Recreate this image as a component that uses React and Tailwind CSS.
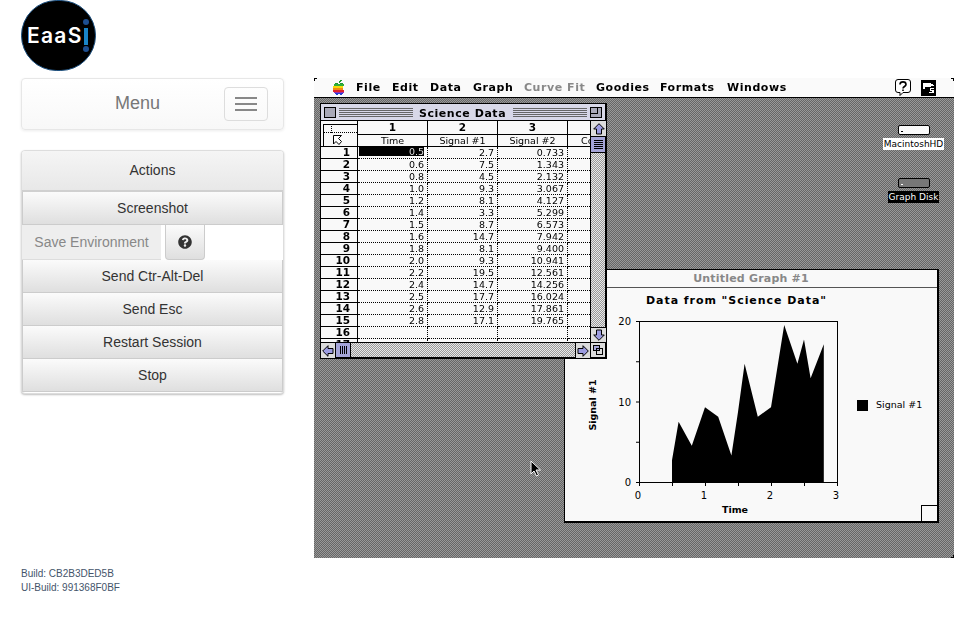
import React from 'react';
import { FaQuestionCircle } from 'react-icons/fa';

const dither = 'bg-[repeating-conic-gradient(#666_0_25%,#999_0_50%)] bg-[length:2px_2px]';
const track = 'bg-[repeating-conic-gradient(#999_0_25%,#e8e8e8_0_50%)] bg-[length:2px_2px]';
const btn = 'flex items-center justify-center bg-gradient-to-b from-[#fbfbfb] to-[#dfdfdf] text-[14px] text-[#333]';

const rows = [
  [0.5, 2.7, 0.733], [0.6, 7.5, 1.343], [0.8, 4.5, 2.132], [1.0, 9.3, 3.067], [1.2, 8.1, 4.127],
  [1.4, 3.3, 5.299], [1.5, 8.7, 6.573], [1.6, 14.7, 7.942], [1.8, 8.1, 9.4], [2.0, 9.3, 10.941],
  [2.2, 19.5, 12.561], [2.4, 14.7, 14.256], [2.5, 17.7, 16.024], [2.6, 12.9, 17.861], [2.8, 17.1, 19.765],
];

const Logo = () => (
  <div className="relative w-[75px] h-[71px] rounded-full bg-black border border-[#1b4f7f] flex items-center pl-[5px]">
    <span className="font-['Inter',sans-serif] font-semibold text-white text-[21px] leading-none tracking-[1.3px]">EaaS</span>
    <span className="absolute left-[61px] top-[18px] w-[6px] h-[6px] rounded-full bg-[#1d4f91]"></span>
    <span className="absolute left-[62px] top-[27px] w-[4px] h-[17px] bg-[#1a85c8]"></span>
    <span className="absolute left-[61px] top-[45px] w-[6px] h-[6px] rounded-full bg-[#1d4f91]"></span>
  </div>
);

const Sidebar = () => (
  <div className="w-[263px] ml-[21px] shrink-0 flex flex-col font-['Liberation_Sans',sans-serif]">
    <Logo />
    <div className="mt-[7px] h-[52px] rounded border border-[#e7e7e7] bg-gradient-to-b from-white to-[#f8f8f8] shadow-[0_1px_3px_rgba(0,0,0,0.08)] flex items-center pl-[93px] pr-[15px] justify-between">
      <span className="text-[18px] text-[#777] pb-[2px]">Menu</span>
      <div className="w-[44px] h-[34px] rounded border border-[#ddd] flex flex-col items-center justify-center gap-[4px]">
        <span className="w-[22px] h-[2px] bg-[#888]"></span>
        <span className="w-[22px] h-[2px] bg-[#888]"></span>
        <span className="w-[22px] h-[2px] bg-[#888]"></span>
      </div>
    </div>
    <div className="mt-[20px] rounded border border-[#ddd] shadow-[0_1px_2px_rgba(0,0,0,0.25)] overflow-hidden bg-white pb-[1px]">
      <div className="h-[41px] bg-gradient-to-b from-[#f5f5f5] to-[#e8e8e8] border-b-2 border-[#d0d0d0] flex items-center justify-center text-[14px] text-[#333]">Actions</div>
      <div className={`${btn} h-[33px] border-x border-b border-[#ccc]`}>Screenshot</div>
      <div className="h-[35px] flex">
        <div className="w-[139px] h-[35px] bg-[#eee] border-b border-[#ddd] flex items-center justify-center text-[14px] text-[#888]">Save Environment</div>
        <div className={`${btn} ml-[4px] w-[40px] h-[35px] rounded-b border-x border-b border-[#ccc]`}>
          <FaQuestionCircle size={14} />
        </div>
      </div>
      {['Send Ctr-Alt-Del', 'Send Esc', 'Restart Session', 'Stop'].map((t) => (
        <div key={t} className={`${btn} h-[33px] border-x border-b border-[#ccc]`}>{t}</div>
      ))}
    </div>
    <div className="mt-[173px] text-[10px] leading-[14px] text-[#44546a]">
      <div>Build: CB2B3DED5B</div>
      <div>UI-Build: 991368F0BF</div>
    </div>
  </div>
);

const AppleLogo = () => (
  <svg width="12" height="15" viewBox="0 0 12 15" shapeRendering="crispEdges">
    <path d="M7 0h2v1H8v1H7v1H6V1h1z" fill="#1f9a2e" />
    <rect x="2" y="3" width="3" height="1" fill="#1f9a2e" />
    <rect x="7" y="3" width="3" height="1" fill="#1f9a2e" />
    <rect x="1" y="4" width="10" height="2" fill="#2fae3a" />
    <rect x="0" y="6" width="10" height="2" fill="#f5d90a" />
    <rect x="0" y="8" width="10" height="2" fill="#f08a12" />
    <rect x="0" y="10" width="11" height="2" fill="#e0232b" />
    <rect x="1" y="12" width="10" height="1" fill="#9b2fae" />
    <rect x="2" y="13" width="8" height="1" fill="#2b3fd6" />
    <rect x="3" y="14" width="2" height="1" fill="#2b3fd6" />
    <rect x="7" y="14" width="2" height="1" fill="#2b3fd6" />
  </svg>
);

const MenuBar = () => {
  const items = [
    ['File', 'w-[36px]'], ['Edit', 'w-[38px]'], ['Data', 'w-[43px]'], ['Graph', 'w-[51px]'],
    ['Curve Fit', 'w-[72px] text-[#888]'], ['Goodies', 'w-[64px]'], ['Formats', 'w-[67px]'], ['Windows', 'w-[70px]'],
  ];
  return (
    <div className="h-[20px] bg-[#fafafa] border-b border-black flex items-center pl-[19px] font-['DejaVu_Sans',sans-serif] font-bold text-[11px] tracking-[0.55px] text-black">
      <AppleLogo />
      <div className="ml-[11px] flex pt-[1px] [will-change:transform]">
        {items.map(([t, c]) => <span key={t} className={`${c} whitespace-nowrap`}>{t}</span>)}
      </div>
      <div className="ml-auto mr-[18px] flex items-center gap-[10px]">
        <svg width="16" height="18" viewBox="0 0 16 18">
          <path d="M3 .5h10a2.500 2.500 0 0 1 2.500 2.500v8a2.500 2.500 0 0 1-2.500 2.500H8l-3 3v-3H3A2.500 2.500 0 0 1 .5 11V3A2.500 2.500 0 0 1 3 .5z" fill="#fff" stroke="#000" />
          <path d="M5 5.500c0-3.500 6-3.500 6 0 0 2-3 2-3 4M8 10.500v1.500" fill="none" stroke="#000" strokeWidth="1.600" />
        </svg>
        <svg width="15" height="16" viewBox="0 0 15 16" shapeRendering="crispEdges">
          <rect width="15" height="16" fill="#000" />
          <path d="M2 3h8v1h2v1h1v1h-3v1H4v2H2zM9 8h4v1h-3v1h3v3H8v-1h3v-1H9z" fill="#fff" />
        </svg>
      </div>
    </div>
  );
};

const ArrowBox = ({ dir, className }) => {
  const rot = { up: 0, right: 90, down: 180, left: 270 }[dir];
  return (
    <div className={`w-[15px] h-[15px] bg-[#dcdcdc] shrink-0 flex items-center justify-center ${className || ''}`}>
      <svg width="12" height="12" viewBox="0 0 12 12" style={{ transform: `rotate(${rot}deg)` }}>
        <path d="M6 .7 11.300 6H8.500v5h-5V6H.7z" fill="#9c9ce0" stroke="#000" />
      </svg>
    </div>
  );
};

const fmtRow = (r) => [r[0].toFixed(1), r[1].toFixed(1), r[2].toFixed(3)];

const DataTable = () => (
  <div className="flex-1 relative overflow-hidden text-[9.5px] leading-[11px] text-black [will-change:transform]">
    <div className="flex h-[14px] border-b border-black">
      <div className="w-[37px] border-r border-black"></div>
      {['1', '2', '3'].map((n) => (
        <div key={n} className="w-[70px] border-r border-black text-center font-bold text-[10.5px] leading-[13px]">{n}</div>
      ))}
    </div>
    <div className="flex h-[12px] border-b border-black">
      <div className="w-[37px] border-r border-black"></div>
      {['Time', 'Signal #1', 'Signal #2'].map((n) => (
        <div key={n} className="w-[70px] border-r border-black text-center">{n}</div>
      ))}
      <div className="w-[22px] pl-[13px] whitespace-nowrap overflow-hidden">Co</div>
    </div>
    {/* corner cell with the selection cursor */}
    <div className="absolute left-0 top-0 w-[36px] h-[25px] bg-[#f9f9f9]">
      <span className="absolute left-[2px] top-[3px] w-[34px] border-t border-black"></span>
      <span className="absolute left-[2px] top-[3px] h-[22px] border-l border-black"></span>
      <span className="absolute left-[2px] top-[11px] w-[34px] border-t border-dotted border-black"></span>
      <span className="absolute left-[10px] top-[3px] h-[9px] border-l border-dotted border-black"></span>
      <svg className="absolute left-[11px] top-[14px]" width="11" height="11" viewBox="0 0 11 11">
        <path d="M1.500.5h8l-3 3 3 3-2.500 3-3-3-2.500 2.500z" fill="#fff" stroke="#000" />
      </svg>
    </div>
    {[...rows, null, null].map((r, i) => (
      <div key={i} className="flex h-[12px]">
        <div className="w-[37px] border-r border-b border-black text-right pr-[7px] font-bold text-[10.5px] leading-[11px]">{i + 1}</div>
        {[0, 1, 2].map((c) => (
          <div key={c} className="w-[70px] border-r border-b border-dotted border-black text-right pr-[3px]">
            {r ? (i === 0 && c === 0
              ? <div className="ml-[1px] bg-black text-[#ddd] h-[9px] leading-[9px]">{fmtRow(r)[c]}</div>
              : fmtRow(r)[c]) : ''}
          </div>
        ))}
        <div className="w-[22px] border-b border-dotted border-black"></div>
      </div>
    ))}
  </div>
);

const ScienceWindow = () => (
  <div className="absolute left-[6px] top-[25px] w-[287px] h-[256px] bg-[#f9f9f9] border border-black border-r-2 border-b-2 flex flex-col font-['DejaVu_Sans',sans-serif]">
    <div className="h-[17px] shrink-0 border-b border-black bg-[#d8d8e8] flex items-center px-[3px] gap-[3px]">
      <div className="w-[12px] h-[11px] border border-black bg-[#a8a8b8]"></div>
      <div className="flex-1 h-[9px] bg-[repeating-linear-gradient(#666_0_1px,#d8d8e8_1px_2px)]"></div>
      <span className="font-bold text-[11px] leading-[15px] tracking-[0.55px] px-[3px] pt-[2px] text-black [will-change:transform]">Science Data</span>
      <div className="flex-1 h-[9px] bg-[repeating-linear-gradient(#666_0_1px,#d8d8e8_1px_2px)]"></div>
      <div className="w-[12px] h-[11px] border border-black bg-[#a8a8b8] relative">
        <span className="absolute left-0 top-0 w-[7px] h-[6px] border-r border-b border-black"></span>
      </div>
    </div>
    <div className="flex-1 flex min-h-0">
      <DataTable />
      <div className="w-[15px] border-l border-black flex flex-col">
        <ArrowBox dir="up" className="h-[16px] w-[14px] border-b border-black" />
        <div className="h-[16px] border-b border-black bg-[#a5a5d8] flex flex-col items-center justify-center gap-[1px]">
          <span className="w-[9px] h-[1px] bg-black"></span>
          <span className="w-[9px] h-[1px] bg-black"></span>
          <span className="w-[9px] h-[1px] bg-black"></span>
          <span className="w-[9px] h-[1px] bg-black"></span>
          <span className="w-[9px] h-[1px] bg-black"></span>
        </div>
        <div className={`flex-1 ${track}`}></div>
        <ArrowBox dir="down" className="w-[14px] border-t border-black" />
      </div>
    </div>
    <div className="h-[15px] shrink-0 border-t border-black flex">
      <ArrowBox dir="left" className="h-[14px] border-r border-black" />
      <div className="w-[15px] h-[14px] border-r border-black bg-[#a5a5d8] flex items-center justify-center gap-[1px]">
        <span className="w-[1px] h-[8px] bg-black"></span>
        <span className="w-[1px] h-[8px] bg-black"></span>
        <span className="w-[1px] h-[8px] bg-black"></span>
        <span className="w-[1px] h-[8px] bg-black"></span>
      </div>
      <div className={`flex-1 ${track}`}></div>
      <ArrowBox dir="right" className="h-[14px] border-l border-black" />
      <div className="w-[15px] h-[14px] border-l border-black bg-[#dcdcdc] relative">
        <span className="absolute left-[2px] top-[2px] w-[7px] h-[6px] border border-black bg-[#a5a5d8]"></span>
        <span className="absolute left-[5px] top-[5px] w-[7px] h-[7px] border border-black"></span>
      </div>
    </div>
  </div>
);

// plot area inside the svg: x 74..272, y 8..169
const px = (t) => 74 + t * 66;
const py = (v) => 169 - v * 8.05;

const Chart = () => {
  const pts = rows.map((r) => `${px(r[0])},${py(r[1])}`).join(' ');
  return (
    <svg width="372" height="207" viewBox="0 0 372 207" className="block">
      <polygon points={`${px(0.5)},169 ${pts} ${px(2.8)},169`} fill="#000" />
      <rect x="74.500" y="8.500" width="198" height="161" fill="none" stroke="#000" />
      {[0, 5, 10, 15, 20].map((v) => (
        <line key={v} x1="71" x2="74" y1={py(v) + 0.5} y2={py(v) + 0.5} stroke="#000" />
      ))}
      {[0, 0.5, 1, 1.5, 2, 2.5, 3].map((t) => (
        <line key={t} x1={px(t) + 0.5} x2={px(t) + 0.5} y1="170" y2="173" stroke="#000" />
      ))}
      <g fontFamily="'DejaVu Sans',sans-serif" fontSize="10" fill="#000">
        <text x="66" y="12" textAnchor="end">20</text>
        <text x="66" y="93" textAnchor="end">10</text>
        <text x="66" y="173" textAnchor="end">0</text>
        <text x="73" y="186" textAnchor="middle">0</text>
        <text x="139" y="186" textAnchor="middle">1</text>
        <text x="205" y="186" textAnchor="middle">2</text>
        <text x="271" y="186" textAnchor="middle">3</text>
        <text x="311" y="95" fontSize="9.500">Signal #1</text>
        <text x="170" y="200" textAnchor="middle" fontWeight="bold" fontSize="9.500">Time</text>
        <text transform="translate(31 92) rotate(-90)" textAnchor="middle" fontWeight="bold" fontSize="9.500">Signal #1</text>
      </g>
      <rect x="292" y="87" width="11" height="11" fill="#000" />
    </svg>
  );
};

const GraphWindow = () => (
  <div className="absolute left-[250px] top-[191px] w-[375px] h-[254px] bg-[#f9f9f9] border border-black border-r-2 border-b-2 flex flex-col font-['DejaVu_Sans',sans-serif]">
    <div className="h-[18px] shrink-0 border-b border-[#555] text-center text-[#888] font-bold text-[11px] leading-[17px] tracking-[0.2px]">Untitled Graph #1</div>
    <div className="h-[25px] shrink-0 pl-[81px] font-bold text-[11px] leading-[25px] tracking-[0.95px] text-black">Data from "Science Data"</div>
    <Chart />
    <div className="absolute right-0 bottom-0 w-[16px] h-[16px] border-l border-t border-black"></div>
  </div>
);

const DiskIcon = ({ label, selected, className }) => (
  <div className={`absolute flex flex-col items-center w-[61px] font-['DejaVu_Sans',sans-serif] text-[9px] ${className}`}>
    <div className={`w-[32px] h-[10px] border border-black rounded-[2px] ${selected ? 'bg-[#777]' : 'bg-[#fafafa]'} pl-[2px]`}>
      <span className={`block w-[2px] h-[1px] mt-[5px] ${selected ? 'bg-white' : 'bg-black'}`}></span>
    </div>
    <div className={`mt-[3px] h-[12px] leading-[12px] px-[1px] whitespace-nowrap ${selected ? 'bg-black text-white' : 'bg-white text-black'}`}>{label}</div>
  </div>
);

const Desktop = () => (
  <div className={`relative w-[640px] h-[480px] mt-[78px] ml-[30px] shrink-0 overflow-hidden ${dither}`}>
    <MenuBar />
    <span className="absolute left-0 top-0 w-[3px] h-[1px] bg-black"></span>
    <span className="absolute left-0 top-0 w-[1px] h-[3px] bg-black"></span>
    <span className="absolute right-0 top-0 w-[3px] h-[1px] bg-black"></span>
    <span className="absolute right-0 top-0 w-[1px] h-[3px] bg-black"></span>
    <span className="absolute right-0 bottom-0 w-[3px] h-[1px] bg-black"></span>
    <span className="absolute right-0 bottom-0 w-[1px] h-[3px] bg-black"></span>
    <GraphWindow />
    <ScienceWindow />
    <DiskIcon label="MacintoshHD" className="left-[569px] top-[47px]" />
    <DiskIcon label="Graph Disk" selected className="left-[569px] top-[100px]" />
    <svg className="absolute left-[216px] top-[382px]" width="12" height="18" viewBox="0 0 12 18">
      <path d="M1 1v13l3-3 2.500 5 2-1-2.500-5h4.500z" fill="#000" stroke="#fff" />
    </svg>
  </div>
);

export default function App() {
  return (
    <div className="flex w-[977px] h-[626px] bg-white overflow-hidden">
      <Sidebar />
      <Desktop />
    </div>
  );
}
